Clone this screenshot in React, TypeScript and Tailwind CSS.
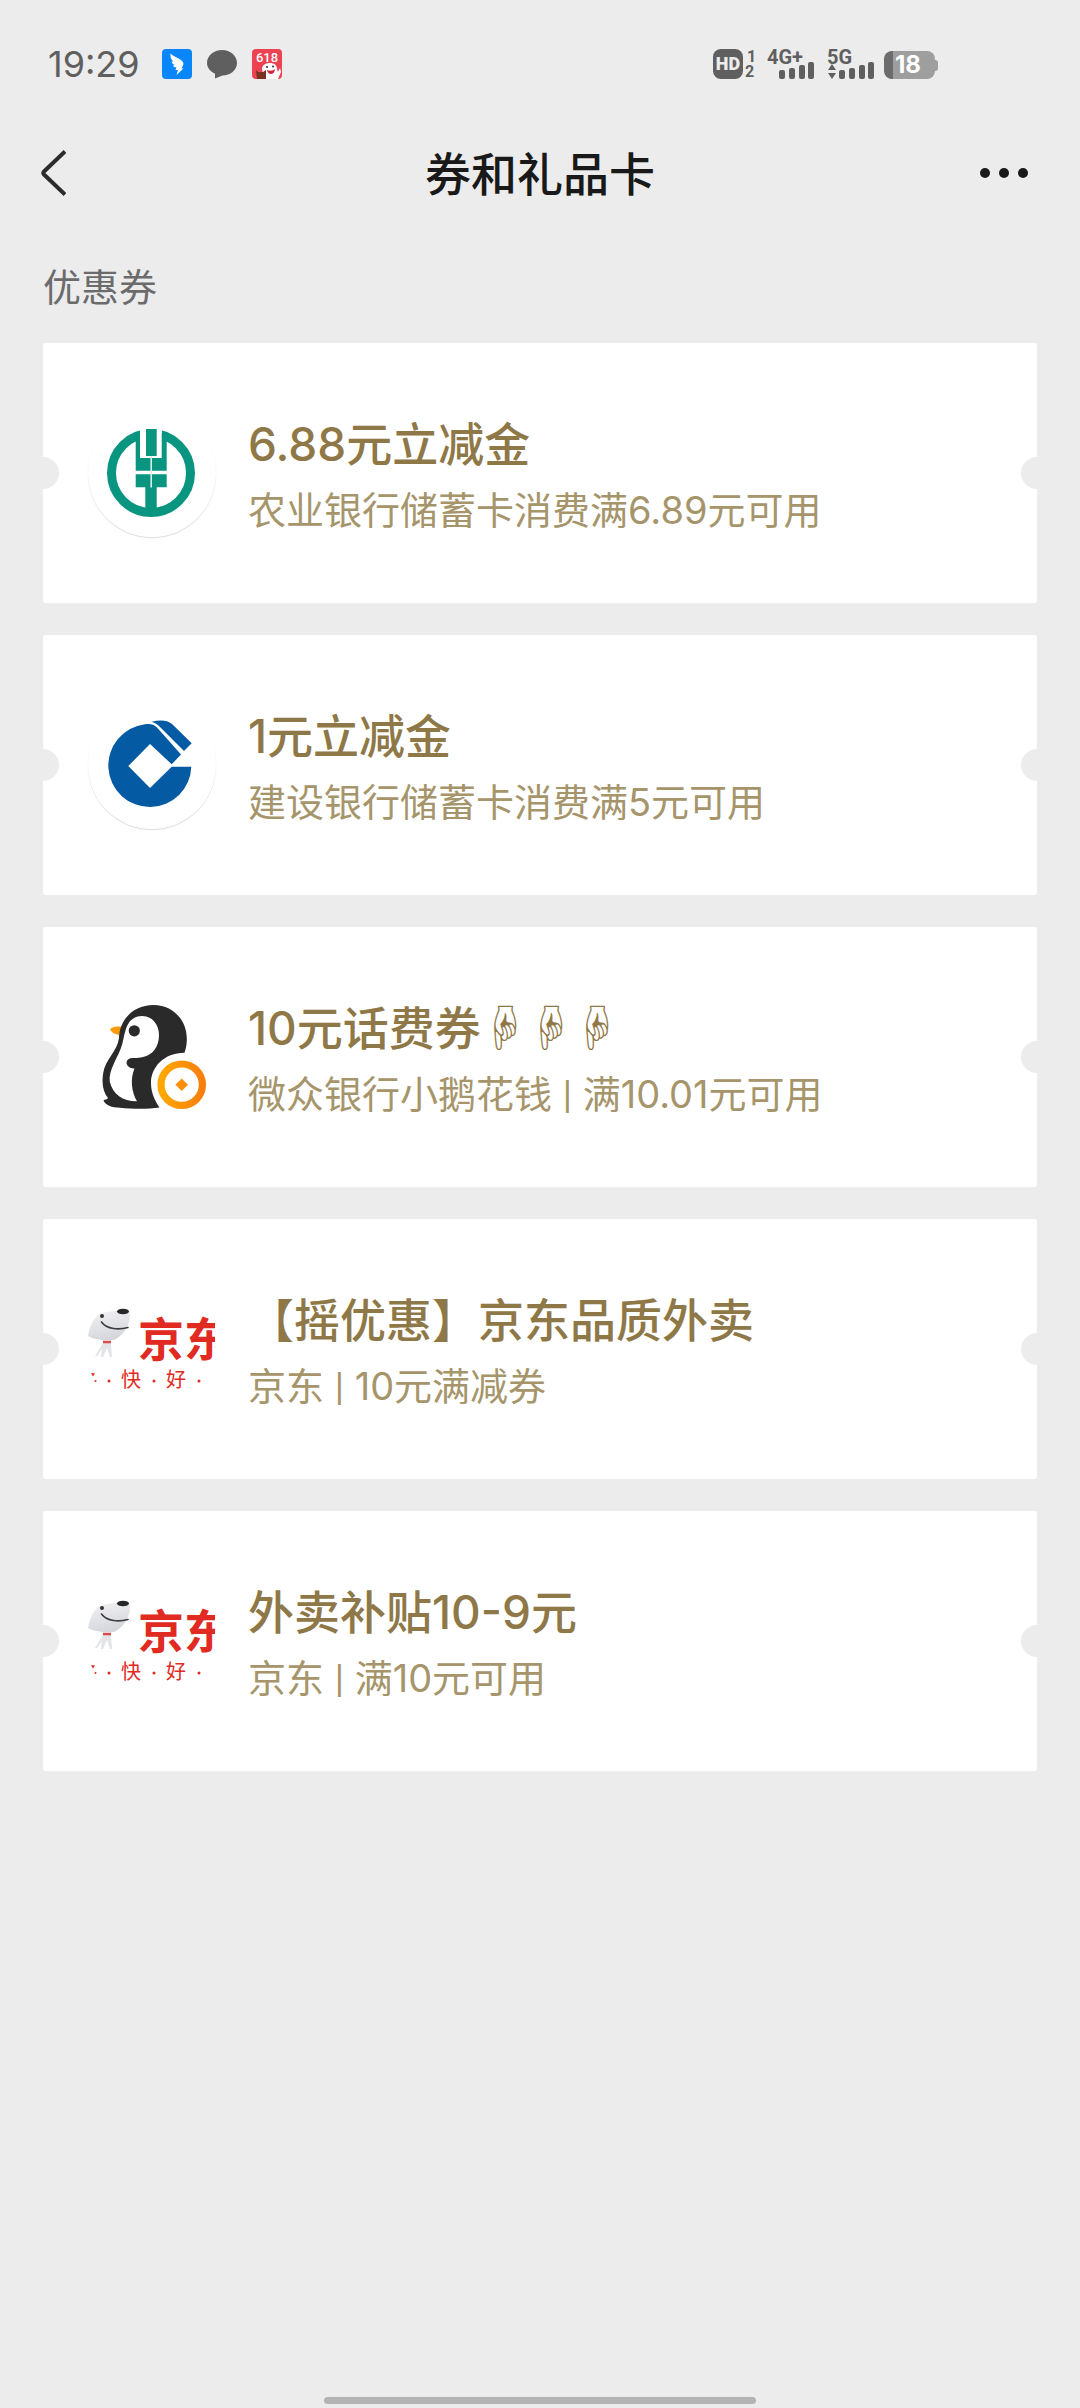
import type { ReactNode } from "react";

function AbcLogo() {
  return (
    <svg viewBox="0 0 128 128" className="h-32 w-32" aria-hidden="true">
      <circle cx="63" cy="64" r="39.5" fill="none" stroke="#0a9580" strokeWidth="9" />
      <path fill="#fff" d="M52 16h22v33H52z" />
      <path
        fill="#0a9580"
        d="M47.7 25.5 52 24v25h21.7V24l5 1.5v36.3h-31zM58 20h10.7v27H58zM47.7 65.3h31v13h-10V104H57.3V78.3h-9.6z"
      />
      <path stroke="#d8efeb" strokeWidth="1.6" d="M63.2 47v31.5" />
    </svg>
  );
}

function CcbLogo() {
  return (
    <svg viewBox="0 0 128 128" className="h-32 w-32" aria-hidden="true">
      <g fill="#045aa3">
        <path d="M57 23.3C62.500 22.600 66 23.600 69 26.600L93 53.500 83.700 63.300 62 43 40.300 65 62 87 83.700 65.700H103.300A41.500 41.500 0 1 1 57 23.300Z" />
        <path d="M63.700 20.700C71 19 79 18.500 84 23L103.700 42.300 96 50 72 26C69.500 23.500 67 21.800 63.700 20.700Z" />
      </g>
    </svg>
  );
}

function PenguinLogo() {
  return (
    <svg viewBox="0 0 128 128" className="h-32 w-32" aria-hidden="true">
      <defs>
        <linearGradient id="coin" x1="0" y1="0" x2="1" y2="0">
          <stop offset="0" stopColor="#ffa800" />
          <stop offset="1" stopColor="#f97f0d" />
        </linearGradient>
      </defs>
      <path fill="#fb9a0c" d="M22 36.500C24.500 33.500 28.500 33 34 34L31 42C27 41.500 23.500 39.500 22 36.500Z" />
      <path
        fill="#2a2a2a"
        d="M15.500 107C17 107 19.500 106.300 20 105C15 99 13.500 90 15.200 80C17.500 66 29 59 31 45C31.500 26 46 12 65.500 12C85 12 98.500 27 98.800 45C99 50 98.200 55 96.500 59.800C76 60 63 74 63 90C63 99.500 66.500 107 71.500 114.500C60 116.300 44 116 32 114.800C24 114.500 17 112.500 15.500 107Z"
      />
      <path
        fill="#fff"
        d="M54 23C64 23 71 31 71 42C71 53.500 65 62 55 64C49 66 42.500 63.500 39.500 67C36.500 71 41 76 46.500 75.500C42 86 43.500 99 49 108.300C35 108.500 25 101.500 21.800 89C20 76 31 64 34.500 50C37.500 39 38 23.500 54 23Z"
      />
      <circle cx="46.300" cy="37.800" r="5.600" fill="#2a2a2a" />
      <circle cx="93.700" cy="91.700" r="20.700" fill="#fff" stroke="url(#coin)" strokeWidth="7.200" />
      <path fill="#fb8f0c" d="m93.700 85.400 6.300 6.300-6.300 6.300-6.300-6.300z" />
    </svg>
  );
}

function JdLogo() {
  return (
    <svg viewBox="0 0 128 128" className="h-32 w-32" aria-hidden="true">
      <defs>
        <linearGradient id="dog" x1="0" y1="0" x2="0.300" y2="1">
          <stop offset="0" stopColor="#f4f4f6" />
          <stop offset="1" stopColor="#d6d7dc" />
        </linearGradient>
        <clipPath id="crop">
          <path d="M0 0h127v128H0z" />
        </clipPath>
      </defs>
      <path fill="url(#dog)" d="M0 51C2 40 6 31 14 28C23 26 30 26 37 24C42 23.500 42.500 29 41.500 35C39 45 34 51 26 55H14C8 54 3 53 0 51Z" />
      <path fill="#e3e4e8" d="M15 58h8l1 14h-2l-3-9-4 9h-2l1-8-5 7H7z" />
      <path stroke="#d9494d" strokeWidth="2.500" d="M15 57h8" />
      <circle cx="14" cy="31" r="2" fill="#333" />
      <ellipse cx="35" cy="26.500" rx="6" ry="2.800" fill="#26262b" />
      <path fill="none" stroke="#3d3d44" strokeWidth="1.600" strokeLinecap="round" d="M13.500 37C19 44.500 31 45 40 42.500" />
      <g clipPath="url(#crop)" fill="#e02a22" fontFamily="'Noto Sans CJK SC', sans-serif">
        <text x="50" y="71" fontSize="46" fontWeight="700">
          京东
        </text>
        <text x="33" y="102" fontSize="20">
          快
        </text>
        <text x="78" y="102" fontSize="20">
          好
        </text>
        <path d="m3 88 4 .5-2 3z" />
        <circle cx="7.500" cy="96" r="1" />
        <circle cx="21" cy="96" r="1.500" />
        <circle cx="66" cy="96" r="1.500" />
        <circle cx="111" cy="96" r="1.500" />
      </g>
    </svg>
  );
}

function Bars() {
  return (
    <svg viewBox="0 0 36 17" className="h-[17px] w-9" fill="#5f5f5f" aria-hidden="true">
      <rect x="0" y="8" width="6" height="9" rx="2" />
      <rect x="10" y="6" width="6" height="11" rx="2" />
      <rect x="20" y="3" width="6" height="14" rx="2" />
      <rect x="29" y="0" width="6" height="17" rx="2" />
    </svg>
  );
}

function StatusBar() {
  return (
    <div className="flex h-32 items-center justify-between pl-12 pr-[142px] text-[#5f5f5f]">
      <div className="flex items-center">
        <span className="w-[114px] text-4xl">19:29</span>
        <div className="flex items-center gap-[15px]">
          <svg viewBox="0 0 30 30" className="h-[30px] w-[30px]" aria-hidden="true">
            <rect width="30" height="30" rx="4" fill="#0a86fb" />
            <path
              fill="#fff"
              d="M8.500 4.500C12 8 17.500 9 20.500 12.500C22 14 21.500 15.500 20.500 17.500L19.500 19.500H21.500L14.500 26L16 21H13.500L14.500 18.500C12.500 18.500 11.500 17.500 11 16.500L13 16C10.500 15 9.500 13.500 9.500 12.500L11.500 12.700C9 10.500 8 7.500 8.500 4.500Z"
            />
          </svg>
          <svg viewBox="0 0 30 30" className="h-[30px] w-[30px]" aria-hidden="true">
            <path
              fill="#5f5f5f"
              d="M15 1C23.300 1 30 6.800 30 14S23.300 26.500 15.500 26.500L8 29.500V24.800C3.200 22.500 0 18.500 0 14C0 6.800 6.700 1 15 1Z"
            />
          </svg>
          <svg viewBox="0 0 30 30" className="h-[30px] w-[30px]" aria-hidden="true">
            <rect width="30" height="30" rx="4" fill="#ec4353" />
            <text x="15" y="13" textAnchor="middle" fontSize="13" fontWeight="500" fill="#fff" fontFamily="Roboto, sans-serif">
              618
            </text>
            <path fill="#fff" d="M10 20c0-4 4-6 8-6s7 2 7 6l1 3 2-4 1 4-3 7H12z" />
            <path fill="#d6273b" d="M15 21c3 1 6 1 8-1 0 3-2 5-4 5s-4-2-4-4z" />
            <path fill="#7a3320" d="M4 21l2 2h5l3-2v9H5z" />
            <circle cx="15" cy="18" r="1" fill="#333" />
            <circle cx="21" cy="17.500" r="1" fill="#333" />
          </svg>
        </div>
      </div>

      <div className="flex h-[30px] items-end">
        <span className="flex h-[30px] w-[30px] items-center justify-center rounded-lg bg-[#5f5f5f] font-[Roboto,sans-serif] text-lg font-black text-[#ececec]">
          HD
        </span>
        <span className="flex w-6 flex-col pl-[2px] font-[Roboto,sans-serif] text-base font-bold leading-[15px]">
          <span className="pl-[2px]">1</span>
          <span>2</span>
        </span>
        {/* Signal of the two SIM cards */}
        <div className="relative flex w-[60px] pl-3">
          <span className="absolute bottom-3 left-0 font-[Roboto,sans-serif] text-xl font-bold leading-5">4G+</span>
          <Bars />
        </div>
        <div className="relative flex w-[57px] pl-3">
          <span className="absolute bottom-3 left-0 font-[Roboto,sans-serif] text-xl font-bold leading-5">5G</span>
          <svg viewBox="0 0 10 15" className="absolute bottom-0 left-0 h-[15px] w-[10px]" fill="#5f5f5f" aria-hidden="true">
            <path d="M5 0l4 6H1zM1 9h8l-4 6z" />
          </svg>
          <Bars />
        </div>
        <div className="flex items-center">
          <span className="flex h-7 w-[51px] items-center justify-center rounded-lg border-l-[9px] border-[#6c6c6c] bg-[#9e9e9e] pr-3 text-2xl font-bold text-white">
            18
          </span>
          <span className="h-[11px] w-[3px] rounded-r-sm bg-[#9e9e9e]" />
        </div>
      </div>
    </div>
  );
}

function RoundLogo({ children }: { children: ReactNode }) {
  return <div className="h-32 w-32 rounded-full shadow-[0_1px_1px_#dcdcdc]">{children}</div>;
}

const bar = <span className="font-[Roboto,sans-serif]">|</span>;

const coupons = [
  {
    title: "6.88元立减金",
    detail: "农业银行储蓄卡消费满6.89元可用",
    logo: (
      <RoundLogo>
        <AbcLogo />
      </RoundLogo>
    ),
  },
  {
    title: "1元立减金",
    detail: "建设银行储蓄卡消费满5元可用",
    logo: (
      <RoundLogo>
        <CcbLogo />
      </RoundLogo>
    ),
  },
  { title: "10元话费券☟☟☟", detail: <>微众银行小鹅花钱 {bar} 满10.01元可用</>, logo: <PenguinLogo /> },
  { title: "【摇优惠】京东品质外卖", detail: <>京东 {bar} 10元满减券</>, logo: <JdLogo /> },
  { title: "外卖补贴10-9元", detail: <>京东 {bar} 满10元可用</>, logo: <JdLogo /> },
];

export default function App() {
  return (
    <div className="flex min-h-screen flex-col bg-[#ececec] font-[Inter,'Noto_Sans_CJK_SC',sans-serif]">
      <StatusBar />

      <header className="flex h-[90px] items-center justify-between px-8">
        <button type="button" aria-label="返回" className="flex h-16 w-20 items-center pl-2">
          <svg viewBox="0 0 26 46" className="h-[46px] w-[26px]" fill="none" stroke="#2b2b2b" strokeWidth="4" aria-hidden="true">
            <path d="M25 1.500 4 21.500q-1.500 1.500 0 3L25 44.500" />
          </svg>
        </button>
        <h1 className="pt-[2px] text-[46px] font-medium text-[#191919]">券和礼品卡</h1>
        <button type="button" aria-label="更多" className="flex h-16 w-20 items-center justify-end gap-[9px] pr-5">
          <span className="h-[10px] w-[10px] rounded-full bg-[#191919]" />
          <span className="h-[10px] w-[10px] rounded-full bg-[#191919]" />
          <span className="h-[10px] w-[10px] rounded-full bg-[#191919]" />
        </button>
      </header>

      <main className="px-[43px]">
        <h2 className="pb-7 pt-[41px] text-[38px] leading-[56px] text-[#6b6b6b]">优惠券</h2>
        <ul className="flex flex-col gap-8">
          {coupons.map((coupon) => (
            <li key={coupon.title} className="relative overflow-hidden rounded-[3px] bg-white">
              <a href="#" className="flex h-[260px] items-center gap-8 px-[45px]">
                {coupon.logo}
                <div className="pt-[6px]">
                  <p className="text-[46px] font-medium leading-[68px] text-[#8f7847]">{coupon.title}</p>
                  <p className="text-[38px] leading-[64px] text-[#a6956b]">{coupon.detail}</p>
                </div>
              </a>
              {/* Ticket notches */}
              <span className="absolute -left-4 top-1/2 h-8 w-8 -translate-y-1/2 rounded-full bg-[#ececec]" />
              <span className="absolute -right-4 top-1/2 h-8 w-8 -translate-y-1/2 rounded-full bg-[#ececec]" />
            </li>
          ))}
        </ul>
      </main>

      <div className="mx-auto mb-1 mt-auto h-[7px] w-2/5 rounded-full bg-[#b4b4b4]" />
    </div>
  );
}
